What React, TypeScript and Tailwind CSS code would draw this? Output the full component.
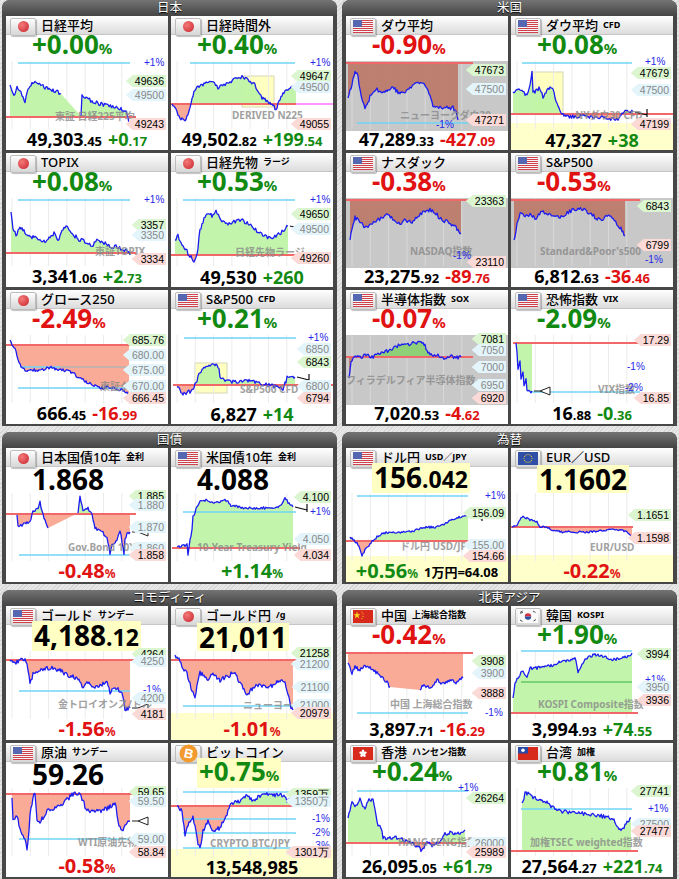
import React from "react";

type P = [number, number] | null;
type TagK = "h" | "m" | "l";
interface Cfg {
  t: string;
  s?: string;
  f: string;
  ox: number;
  oy: number;
  head: React.ReactNode;
  foot: React.ReactNode;
  ref: [number, number, number];
  cy?: [number, number, number][];
  extra?: [number, number, number, string][];
  pts: P[];
  gray?: boolean;
  inv?: boolean;
  hl?: [number, number, number, number];
  yb?: number;
  tags: [number, string, TagK][];
  pc?: [number, number, string][];
  wm?: [string, number, number];
  mk?: "t" | "r";
  nz?: number;
  seed: number;
}

function rng(seed: number) {
  let a = seed >>> 0;
  return () => {
    a = (a + 0x6d2b79f5) | 0;
    let t = Math.imul(a ^ (a >>> 15), 1 | a);
    t = (t + Math.imul(t ^ (t >>> 7), 61 | t)) ^ t;
    return ((t ^ (t >>> 14)) >>> 0) / 4294967296;
  };
}

// jagged line through key points
function jag(pts: number[][], noise: number, seed: number) {
  const r = rng(seed);
  const out: number[][] = [];
  for (let i = 0; i < pts.length - 1; i++) {
    const [x1, y1] = pts[i];
    const [x2, y2] = pts[i + 1];
    const n = Math.max(1, Math.round((x2 - x1) / 1.1));
    for (let s = 0; s < n; s++) {
      const t = s / n;
      let y = y1 + (y2 - y1) * t;
      if (s > 0 || i > 0) y += (r() - 0.5) * 2 * noise;
      out.push([x1 + (x2 - x1) * t, y]);
    }
  }
  out.push(pts[pts.length - 1]);
  return out;
}

const GR = "text-[#128a12]";
const RD = "text-[#e01212]";

const Pc = ({ v, up, yb }: { v: string; up: boolean; yb?: boolean }) => (
  <span className={`font-bold text-[26px] leading-[26px] ${up ? GR : RD} ${yb ? "bg-[#ffffc4] px-[2px]" : ""}`}>
    {v}
    <span className="text-[15px]">%</span>
  </span>
);

const Vl = ({ m, d, yb }: { m: string; d?: string; yb?: boolean }) => (
  <span className={`font-bold text-[28px] leading-[28px] text-black ${yb ? "bg-[#ffffc4] px-[2px]" : ""}`}>
    {m}
    {d && <span className="text-[23px]">{d}</span>}
  </span>
);

const Nm = ({ m, d, c }: { m: string; d?: string; c?: "g" | "r" }) => (
  <span className={`font-bold text-[18px] leading-[20px] ${c === "g" ? GR : c === "r" ? RD : "text-black"}`}>
    {m}
    {d && <span className="text-[13px]">{d}</span>}
  </span>
);

const Fp = ({ v, up }: { v: string; up: boolean }) => (
  <span className={`font-bold text-[20px] leading-[21px] ${up ? GR : RD}`}>
    {v}
    <span className="text-[12px]">%</span>
  </span>
);

const tagCls: Record<TagK, string> = {
  h: "bg-[#daf5cf] text-black",
  m: "bg-[#e3f5fb] text-[#888]",
  l: "bg-[#fbd9d6] text-black",
};

function Flag({ f }: { f: string }) {
  if (f === "jp")
    return <span className="w-[11px] h-[11px] rounded-full bg-[radial-gradient(circle_at_35%_35%,#f47a78,#c8232d)]" />;
  if (f === "us")
    return (
      <svg width="20" height="13" viewBox="0 0 20 13">
        <rect width="20" height="13" fill="#f4f4f4" />
        {[0, 2, 4, 6, 8, 10, 12].map((y) => (
          <rect key={y} y={y} width="20" height="1" fill="#d0414c" />
        ))}
        <rect width="9" height="7" fill="#5567b0" />
      </svg>
    );
  if (f === "eu")
    return (
      <svg width="20" height="13" viewBox="0 0 20 13">
        <rect width="20" height="13" fill="#3050a8" />
        {Array.from({ length: 12 }).map((_, i) => (
          <circle key={i} cx={10 + 4 * Math.cos((i * Math.PI) / 6)} cy={6.5 + 4 * Math.sin((i * Math.PI) / 6)} r="0.6" fill="#f5d020" />
        ))}
      </svg>
    );
  if (f === "cn")
    return (
      <svg width="20" height="13" viewBox="0 0 20 13">
        <rect width="20" height="13" fill="#d8291d" />
        <polygon points="4,1.5 4.9,4.2 7.6,4.2 5.4,5.8 6.2,8.4 4,6.8 1.8,8.4 2.6,5.8 0.4,4.2 3.1,4.2" fill="#f8d81e" />
        <circle cx="9" cy="2" r="0.6" fill="#f8d81e" />
        <circle cx="10" cy="4" r="0.6" fill="#f8d81e" />
        <circle cx="10" cy="6.5" r="0.6" fill="#f8d81e" />
        <circle cx="9" cy="8.5" r="0.6" fill="#f8d81e" />
      </svg>
    );
  if (f === "kr")
    return (
      <svg width="20" height="13" viewBox="0 0 20 13">
        <rect width="20" height="13" fill="#fafafa" />
        <path d="M6.8 6.5 A3.2 3.2 0 0 1 13.2 6.5 Z" fill="#d43040" />
        <path d="M6.8 6.5 A3.2 3.2 0 0 0 13.2 6.5 Z" fill="#2850a0" />
        <path d="M2 2.5 L4.5 1 M2.5 3.5 L5 2 M15 1 L17.5 2.5 M15.5 11 L18 9.5 M2 10 L4.5 11.5" stroke="#222" strokeWidth="0.8" />
      </svg>
    );
  if (f === "hk")
    return (
      <svg width="20" height="13" viewBox="0 0 20 13">
        <rect width="20" height="13" fill="#d8291d" />
        {[0, 1, 2, 3, 4].map((i) => {
          const cx = 10 + 2 * Math.cos((i * 2 * Math.PI) / 5 - Math.PI / 2);
          const cy = 6.5 + 2 * Math.sin((i * 2 * Math.PI) / 5 - Math.PI / 2);
          return <ellipse key={i} cx={cx} cy={cy} rx="1.3" ry="1.9" fill="#fff" transform={`rotate(${i * 72} ${cx} ${cy})`} />;
        })}
      </svg>
    );
  if (f === "tw")
    return (
      <svg width="20" height="13" viewBox="0 0 20 13">
        <rect width="20" height="13" fill="#d8291d" />
        <rect width="10" height="6.5" fill="#2848a8" />
        <circle cx="5" cy="3.25" r="1.8" fill="#fff" />
      </svg>
    );
  return (
    <svg width="19" height="19" viewBox="0 0 19 19">
      <circle cx="9.5" cy="9.5" r="9" fill="#f29a2e" />
      <text x="9.8" y="14" textAnchor="middle" fontSize="13" fontWeight="bold" fill="#fff" fontFamily="Liberation Sans, sans-serif" transform="rotate(12 9.5 9.5)">
        B
      </text>
    </svg>
  );
}

function Chart({ c, id }: { c: Cfg; id: string }) {
  const segs: number[][][] = [];
  let cur: number[][] = [];
  c.pts.forEach((p) => {
    if (p === null) {
      segs.push(cur);
      cur = [];
    } else cur.push([p[0] - c.ox, p[1] - c.oy]);
  });
  if (cur.length) segs.push(cur);
  const js = segs.map((s, i) => jag(s, c.nz ?? 1.6, c.seed + i * 17));
  const all = js.flat();
  const ry = c.ref[0] - c.oy;
  const first = all[0];
  const last = all[all.length - 1];
  const poly = [...all, [last[0], ry], [first[0], ry]].map((p) => p[0].toFixed(1) + "," + p[1].toFixed(1)).join(" ");
  const up = c.gray ? "#88d070" : "#bdf4a4";
  const dn = c.gray ? "#bc7a68" : "#f8a48e";
  const aC = c.inv ? dn : up;
  const bC = c.inv ? up : dn;
  const [lx, ly] = last;
  return (
    <>
      <svg className="absolute left-0 top-0 overflow-visible" width={162} height={68}>
        <defs>
          <clipPath id={id + "a"}>
            <rect x={0} y={-20} width={162} height={ry + 20} />
          </clipPath>
          <clipPath id={id + "b"}>
            <rect x={0} y={ry} width={162} height={120} />
          </clipPath>
        </defs>
        {c.gray && <rect x={0} y={0} width={162} height={70} fill="#c8c8c8" />}
        {c.hl && (
          <rect x={c.hl[0] - c.ox} y={c.hl[1] - c.oy} width={c.hl[2] - c.hl[0]} height={c.hl[3] - c.hl[1]} fill="#ffffc0" stroke="#d6d6b8" />
        )}
        {[0, 1, 2, 3, 4, 5, 6].map((i) => (
          <line key={i} x1={6 + i * 18.3} x2={6 + i * 18.3} y1={0} y2={68} stroke={c.gray ? "#d8d8d8" : "#ececec"} />
        ))}
        <polygon points={poly} fill={aC} clipPath={`url(#${id}a)`} opacity={0.92} />
        <polygon points={poly} fill={bC} clipPath={`url(#${id}b)`} opacity={0.92} />
        {(c.cy ?? []).map(([y, x1, x2], i) => (
          <line key={i} x1={x1 - c.ox} x2={x2 - c.ox} y1={y - c.oy} y2={y - c.oy} stroke="#6fd4f6" strokeWidth={1.6} />
        ))}
        {(c.extra ?? []).map(([y, x1, x2, col], i) => (
          <line key={i} x1={x1 - c.ox} x2={x2 - c.ox} y1={y - c.oy} y2={y - c.oy} stroke={col} strokeWidth={1.6} />
        ))}
        <line x1={c.ref[1] - c.ox} x2={c.ref[2] - c.ox} y1={ry} y2={ry} stroke="#f26868" strokeWidth={2} />
        {js.map((s, i) => (
          <polyline key={i} points={s.map((p) => p[0].toFixed(1) + "," + p[1].toFixed(1)).join(" ")} fill="none" stroke="#1c1cf2" strokeWidth={1.3} strokeLinejoin="round" />
        ))}
        {c.mk === "t" && (
          <path d={`M${lx + 2} ${ly} L${lx + 14} ${ly + 3} M${lx + 14} ${ly - 3} L${lx + 14} ${ly + 5}`} stroke="#111" strokeWidth={1.2} fill="none" />
        )}
        {c.mk === "r" && (
          <>
            <line x1={lx + 2} y1={ly} x2={lx + 8} y2={ly} stroke="#222" />
            <polygon points={`${lx + 8},${ly} ${lx + 18},${ly - 4} ${lx + 18},${ly + 4}`} fill="#fff" stroke="#222" strokeWidth={1} />
          </>
        )}
      </svg>
      {c.wm && (
        <span
          className="absolute whitespace-nowrap text-[10px] font-bold leading-none text-[#8a8a8a] opacity-80"
          style={{ left: c.wm[1] - c.ox, top: c.wm[2] - c.oy - 6 }}
        >
          {c.wm[0]}
        </span>
      )}
      {(c.pc ?? []).map(([x, y, t], i) => (
        <span
          key={i}
          className="absolute text-[10px] leading-none text-[#2626ea] font-['Liberation_Sans',sans-serif]"
          style={{ left: x - c.ox, top: y - c.oy - 5 }}
        >
          {t}
        </span>
      ))}
      {c.tags.map(([y, t, k], i) => (
        <div
          key={i}
          className={`absolute right-[2px] h-[12px] pl-[9px] pr-[2px] text-[10.5px] leading-[12px] font-['Liberation_Sans',sans-serif] [clip-path:polygon(7px_0,100%_0,100%_100%,7px_100%,0_50%)] ${tagCls[k]}`}
          style={{ top: y - c.oy - 6 }}
        >
          {t}
        </div>
      ))}
    </>
  );
}

function Tile({ c, id }: { c: Cfg; id: string }) {
  return (
    <div className="relative h-[134px] bg-white overflow-hidden">
      {c.yb && <div className="absolute left-0 right-0 bottom-0 bg-[#ffffcc]" style={{ top: c.yb - c.oy + 45 }} />}
      <div className="relative flex flex-col h-full">
        <div className="h-[19px] flex items-center gap-[5px] pl-[4px] bg-gradient-to-b from-white to-[#dcdcdc] border-b border-[#c6c6c6]">
          <div className="w-[26px] h-[18px] mt-[3px] shrink-0 rounded-[2px] border border-[#bcbcbc] bg-gradient-to-b from-[#fdfdfd] to-[#d6d6d6] shadow-[1px_1px_1px_rgba(0,0,0,0.25)] flex items-center justify-center">
            <Flag f={c.f} />
          </div>
          <span className="text-[13px] font-medium leading-[16px] text-black whitespace-nowrap">{c.t}</span>
          {c.s && <span className="text-[9px] font-bold leading-[12px] text-black whitespace-nowrap">{c.s}</span>}
        </div>
        <div className="h-[26px] pl-[26px] flex items-end">{c.head}</div>
        <div className="relative h-[68px]">
          <Chart c={c} id={id} />
        </div>
        <div className="h-[21px] flex items-center justify-center gap-[6px]">{c.foot}</div>
      </div>
    </div>
  );
}

const jp: Cfg[] = [
  {
    t: "日経平均", f: "jp", ox: 6, oy: 61, seed: 11, nz: 2,
    head: <Pc v="+0.00" up />,
    foot: <><Nm m="49,303" d=".45" /><Nm m="+0" d=".17" c="g" /></>,
    ref: [117, 6, 136], cy: [[63, 18, 130]],
    pts: [[10, 85], [12, 91], [14, 95], [17, 88], [21, 92], [25, 102], [28, 90], [32, 84], [36, 81], [42, 86], [47, 88], [52, 90], [57, 92], [61, 94], null,
      [81, 116], [82, 95], [86, 98], [92, 101], [100, 104], [108, 105], [114, 107], [120, 109], [125, 110], [128, 117], [129, 123]],
    tags: [[81, "49636", "h"], [95, "49500", "m"], [124, "49243", "l"]],
    pc: [[144, 63, "+1%"]], wm: ["東証 日経225平均", 55, 117],
  },
  {
    t: "日経時間外", f: "jp", ox: 171, oy: 61, seed: 22, nz: 1.8, mk: "t",
    head: <Pc v="+0.40" up />,
    foot: <><Nm m="49,502" d=".82" /><Nm m="+199" d=".54" c="g" /></>,
    ref: [104, 171, 296], cy: [[63, 190, 295]], extra: [[104, 296, 333, "#ff73ff"]], hl: [242, 76, 274, 107],
    pts: [[172, 104], [176, 110], [180, 118], [185, 122], [189, 112], [192, 98], [195, 90], [200, 86], [205, 84], [212, 82], [218, 88], [224, 85], [230, 82], [236, 78], [242, 77], [248, 80], [254, 84], [258, 92], [262, 98], [266, 100], [270, 103], [274, 106], [276, 110], [278, 103], [282, 96], [286, 90], [291, 88], [296, 88]],
    tags: [[76, "49647", "h"], [87, "49500", "m"], [124, "49055", "l"]],
    pc: [[310, 63, "+1%"]], wm: ["DERIVED N225", 232, 116],
  },
  {
    t: "TOPIX", f: "jp", ox: 6, oy: 198, seed: 33, nz: 2,
    head: <Pc v="+0.08" up />,
    foot: <><Nm m="3,341" d=".06" /><Nm m="+2" d=".73" c="g" /></>,
    ref: [253, 6, 136], cy: [[200, 18, 130]],
    pts: [[11, 212], [13, 228], [16, 236], [20, 226], [25, 232], [30, 238], [35, 236], [40, 240], [45, 241], [50, 238], [55, 232], [58, 240], [62, 232], [66, 226], [70, 230], [75, 236], [80, 240], [86, 242], [92, 245], [98, 240], [104, 243], [110, 247], [116, 246], [122, 249], [128, 252], [130, 255]],
    tags: [[225, "3357", "h"], [235, "3350", "m"], [259, "3334", "l"]],
    pc: [[144, 200, "+1%"]], wm: ["東証TOPIX", 95, 252],
  },
  {
    t: "日経先物", s: "ラージ", f: "jp", ox: 171, oy: 198, seed: 44, nz: 2, mk: "t",
    head: <Pc v="+0.53" up />,
    foot: <><Nm m="49,530" /><Nm m="+260" c="g" /></>,
    ref: [255, 171, 300], cy: [[200, 183, 295]],
    pts: [[175, 240], [178, 236], [182, 245], [186, 250], [190, 256], [194, 262], [197, 255], [200, 230], [204, 218], [208, 214], [212, 216], [216, 212], [222, 220], [228, 224], [234, 222], [240, 220], [246, 222], [252, 226], [258, 232], [264, 236], [270, 238], [276, 236], [282, 232], [288, 226]],
    tags: [[214, "49650", "h"], [229, "49500", "m"], [258, "49260", "l"]],
    pc: [[310, 200, "+1%"]], wm: ["日経先物ラージ", 235, 253],
  },
  {
    t: "グロース250", f: "jp", ox: 6, oy: 335, seed: 55, nz: 1.6,
    head: <Pc v="-2.49" up={false} />,
    foot: <><Nm m="666" d=".45" /><Nm m="-16" d=".99" c="r" /></>,
    ref: [345, 6, 136], cy: [[367, 20, 60], [388, 18, 130]], extra: [[367, 60, 130, "#b4b4b4"]],
    pts: [[10, 340], [12, 344], [14, 347], [16, 352], [18, 360], [20, 365], [22, 368], [27, 372], [33, 370], [40, 371], [46, 369], [50, 367], [54, 368], [57, 369], [63, 370], [70, 371], [74, 374], [77, 377], [83, 380], [88, 383], [93, 385], [98, 387], [103, 388], [108, 387], [113, 388], [117, 389], [120, 390], [124, 391], [127, 392], [129, 398]],
    tags: [[340, "685.76", "h"], [355, "680.00", "m"], [370, "675.00", "m"], [386, "670.00", "m"], [398, "666.45", "l"]],
    wm: ["東証グロース", 100, 387],
  },
  {
    t: "S&P500", s: "CFD", f: "us", ox: 171, oy: 335, seed: 66, nz: 2, mk: "t",
    head: <Pc v="+0.21" up />,
    foot: <><Nm m="6,827" /><Nm m="+14" c="g" /></>,
    ref: [385, 173, 333], cy: [[338, 184, 296]], hl: [195, 363, 227, 393],
    pts: [[177, 387], [181, 392], [185, 395], [189, 392], [192, 390], [195, 384], [197, 380], [200, 372], [203, 370], [205, 368], [208, 366], [210, 367], [214, 364], [217, 363], [219, 370], [220, 377], [225, 380], [233, 382], [240, 381], [247, 380], [252, 382], [257, 383], [262, 384], [267, 385], [272, 386], [277, 387], [283, 390], [285, 384], [287, 378], [291, 377], [295, 377]],
    tags: [[349, "6850", "m"], [362, "6843", "h"], [386, "6800", "m"], [398, "6794", "l"]],
    pc: [[308, 338, "+1%"]], wm: ["S&P500 CFD", 240, 390],
  },
];

const us: Cfg[] = [
  {
    t: "ダウ平均", f: "us", ox: 346, oy: 61, seed: 77, nz: 2, gray: true,
    head: <Pc v="-0.90" up={false} />,
    foot: <><Nm m="47,289" d=".33" /><Nm m="-427" d=".09" c="r" /></>,
    ref: [63, 346, 473], cy: [[123, 357, 468]],
    pts: [[348, 98], [352, 85], [355, 70], [358, 77], [361, 95], [365, 110], [370, 97], [377, 90], [383, 93], [388, 90], [393, 88], [398, 92], [403, 93], [410, 88], [417, 82], [423, 83], [427, 88], [430, 97], [433, 107], [440, 108], [447, 107], [453, 108], [456, 113], [458, 120]],
    tags: [[70, "47673", "h"], [89, "47500", "m"], [120, "47271", "l"]],
    pc: [[436, 125, "-1%"]], wm: ["ニューヨークダウ30", 400, 116],
  },
  {
    t: "ダウ平均", s: "CFD", f: "us", ox: 511, oy: 61, seed: 88, nz: 1.8, mk: "t", yb: 123,
    head: <Pc v="+0.08" up />,
    foot: <><Nm m="47,327" /><Nm m="+38" c="g" /></>,
    ref: [114, 511, 673], cy: [[63, 522, 632]], hl: [532, 72, 563, 114],
    pts: [[513, 92], [517, 90], [520, 90], [524, 93], [527, 95], [530, 85], [532, 73], [533, 93], [537, 90], [540, 88], [543, 97], [547, 90], [550, 87], [553, 90], [556, 100], [558, 107], [562, 113], [566, 116], [575, 117], [585, 116], [595, 118], [605, 117], [612, 119], [618, 120], [622, 114], [627, 110], [633, 112]],
    tags: [[73, "47679", "h"], [90, "47500", "m"], [124, "47199", "l"]],
    pc: [[645, 62, "+1%"]], wm: ["NYダウ30 CFD", 575, 116],
  },
  {
    t: "ナスダック", f: "us", ox: 346, oy: 198, seed: 99, nz: 2, gray: true,
    head: <Pc v="-0.38" up={false} />,
    foot: <><Nm m="23,275" d=".92" /><Nm m="-89" d=".76" c="r" /></>,
    ref: [200, 346, 473],
    pts: [[350, 240], [352, 228], [355, 218], [360, 222], [365, 228], [370, 225], [376, 220], [382, 218], [388, 214], [394, 220], [400, 224], [406, 220], [412, 222], [418, 216], [424, 212], [430, 210], [436, 214], [442, 220], [448, 222], [454, 226], [458, 230], [461, 233]],
    tags: [[201, "23363", "h"], [262, "23110", "l"]],
    pc: [[453, 256, "-1%"]], wm: ["NASDAQ指数", 410, 252],
  },
  {
    t: "S&P500", f: "us", ox: 511, oy: 198, seed: 111, nz: 2, gray: true,
    head: <Pc v="-0.53" up={false} />,
    foot: <><Nm m="6,812" d=".63" /><Nm m="-36" d=".46" c="r" /></>,
    ref: [200, 511, 640],
    pts: [[514, 240], [517, 225], [520, 212], [524, 216], [530, 215], [536, 218], [542, 212], [548, 214], [554, 216], [560, 218], [566, 214], [572, 210], [578, 208], [584, 210], [590, 213], [596, 218], [602, 222], [606, 216], [612, 218], [618, 226], [622, 230], [625, 236]],
    tags: [[206, "6843", "h"], [245, "6799", "l"]],
    pc: [[645, 260, "-1%"]], wm: ["Standard&Poor's500", 540, 252],
  },
  {
    t: "半導体指数", s: "SOX", f: "us", ox: 346, oy: 335, seed: 122, nz: 2, gray: true,
    head: <Pc v="-0.07" up={false} />,
    foot: <><Nm m="7,020" d=".53" /><Nm m="-4" d=".62" c="r" /></>,
    ref: [357, 346, 473],
    pts: [[349, 378], [351, 362], [354, 356], [360, 358], [366, 355], [372, 357], [378, 355], [384, 353], [390, 349], [396, 346], [402, 345], [408, 344], [414, 343], [420, 341], [424, 344], [428, 351], [432, 356], [438, 355], [444, 358], [450, 356], [456, 358], [461, 357]],
    tags: [[339, "7081", "h"], [350, "7050", "m"], [367, "7000", "m"], [385, "6950", "m"], [398, "6920", "l"]],
    wm: ["フィラデルフィア半導体指数", 346, 381],
  },
  {
    t: "恐怖指数", s: "VIX", f: "us", ox: 511, oy: 335, seed: 133, nz: 1.5, inv: true, mk: "r",
    head: <Pc v="-2.09" up />,
    foot: <><Nm m="16" d=".88" /><Nm m="-0" d=".36" c="g" /></>,
    ref: [343, 513, 640], cy: [[392, 530, 640]],
    pts: [[516, 343], [517, 352], [518, 368], [520, 360], [521, 378], [523, 372], [524, 386], [526, 380], [527, 390], [530, 392], [532, 391]],
    tags: [[340, "17.29", "l"], [398, "16.85", "l"]],
    pc: [[627, 367, "-1%"], [625, 388, "-2%"]], wm: ["VIX指数", 598, 390],
  },
];

const bond: Cfg[] = [
  {
    t: "日本国債10年", s: "金利", f: "jp", ox: 6, oy: 493, seed: 144, nz: 1.5, mk: "r",
    head: <Vl m="1.868" />,
    foot: <Fp v="-0.48" up={false} />,
    ref: [514, 6, 136], cy: [[555, 19, 130]],
    pts: [[17, 515], [18, 527], [22, 525], [26, 523], [30, 522], [32, 515], [33, 512], [36, 510], [38, 508], [40, 502], [42, 512], [45, 520], [48, 528], null,
      [78, 513], [80, 497], [82, 505], [83, 510], [86, 508], [88, 508], [90, 512], [92, 515], [94, 522], [95, 528], [98, 530], [100, 530], [104, 534], [107, 537], [109, 548], [110, 555], [112, 545], [113, 543], [116, 541], [117, 540], [119, 534], [120, 530], [122, 542], [124, 553], [125, 540], [127, 533], [130, 532]],
    tags: [[496, "1.885", "h"], [505, "1.880", "m"], [527, "1.870", "m"], [548, "1.860", "m"], [555, "1.858", "l"]],
    wm: ["Gov.Bond 10Y", 68, 548],
  },
  {
    t: "米国債10年", s: "金利", f: "us", ox: 171, oy: 493, seed: 155, nz: 1.3, mk: "t",
    head: <Vl m="4.088" />,
    foot: <Fp v="+1.14" up />,
    ref: [548, 172, 300], cy: [[512, 183, 296]],
    pts: [[177, 547], [182, 546], [187, 545], [188, 555], [190, 540], [192, 530], [193, 517], [195, 512], [197, 507], [200, 502], [204, 501], [207, 500], [212, 502], [217, 502], [222, 501], [227, 500], [230, 505], [235, 506], [240, 507], [247, 508], [253, 509], [260, 508], [267, 508], [272, 509], [277, 508], [281, 505], [285, 497], [288, 502], [293, 507]],
    tags: [[497, "4.100", "h"], [539, "4.050", "m"], [555, "4.034", "l"]],
    pc: [[310, 512, "+1%"]], wm: ["10-Year Treasury Yield", 197, 548],
  },
];

const fx: Cfg[] = [
  {
    t: "ドル円", s: "USD／JPY", f: "us", ox: 346, oy: 493, seed: 166, nz: 1.2, mk: "t", yb: 556,
    head: <Vl m="156" d=".042" yb />,
    foot: <><Fp v="+0.56" up /><span className="font-bold text-[13px] leading-[16px] text-black">1万円=64.08</span></>,
    ref: [541, 346, 473], cy: [[496, 357, 468]],
    pts: [[350, 537], [353, 540], [356, 542], [358, 545], [360, 550], [362, 555], [365, 550], [367, 547], [370, 544], [373, 540], [377, 537], [380, 535], [385, 533], [390, 532], [398, 532], [407, 532], [412, 531], [417, 530], [422, 528], [427, 527], [432, 527], [437, 527], [442, 525], [447, 523], [450, 521], [453, 520], [457, 518], [460, 517], [464, 516], [468, 516]],
    tags: [[513, "156.09", "h"], [545, "155.00", "m"], [556, "154.66", "l"]],
    pc: [[485, 496, "+1%"]], wm: ["ドル円 USD/JPY", 400, 547],
  },
  {
    t: "EUR／USD", f: "eu", ox: 511, oy: 493, seed: 177, nz: 1, mk: "t", yb: 555,
    head: <Vl m="1.1602" yb />,
    foot: <Fp v="-0.22" up={false} />,
    ref: [527, 511, 633],
    pts: [[512, 527], [515, 526], [517, 525], [520, 520], [523, 516], [526, 518], [530, 520], [534, 521], [537, 522], [540, 527], [544, 527], [547, 527], [550, 529], [553, 530], [557, 531], [560, 532], [567, 532], [573, 532], [580, 532], [590, 532], [598, 531], [607, 530], [614, 530], [620, 530], [624, 531], [627, 532], [630, 535], [632, 537]],
    tags: [[515, "1.1651", "h"], [538, "1.1598", "l"]],
    wm: ["EUR/USD", 590, 548],
  },
];

const cmd: Cfg[] = [
  {
    t: "ゴールド", s: "サンデー", f: "us", ox: 6, oy: 651, seed: 188, nz: 2.2, mk: "r",
    head: <Vl m="4,188" d=".12" yb />,
    foot: <Fp v="-1.56" up={false} />,
    ref: [660, 6, 136], cy: [[691, 19, 130]],
    pts: [[10, 660], [14, 662], [17, 662], [20, 660], [23, 658], [25, 660], [27, 665], [29, 675], [30, 683], [32, 678], [33, 673], [36, 672], [40, 670], [45, 669], [50, 668], [55, 669], [60, 670], [64, 673], [67, 675], [70, 676], [73, 677], [77, 679], [80, 680], [82, 686], [83, 690], [85, 686], [87, 683], [92, 685], [97, 687], [102, 684], [107, 682], [109, 688], [110, 693], [113, 690], [117, 688], [120, 691], [122, 693], [124, 702], [125, 710], [128, 709], [130, 708]],
    tags: [[654, "4264", "h"], [661, "4250", "m"], [698, "4200", "m"], [714, "4181", "l"]],
    pc: [[143, 690, "-1%"]], wm: ["金トロイオンス/ドル", 58, 705],
  },
  {
    t: "ゴールド円", s: "/g", f: "jp", ox: 171, oy: 651, seed: 199, nz: 2.2, mk: "t", yb: 713,
    head: <Vl m="21,011" yb />,
    foot: <Fp v="-1.01" up={false} />,
    ref: [660, 171, 300], cy: [[706, 183, 295]],
    pts: [[175, 655], [178, 658], [180, 660], [183, 668], [186, 672], [188, 677], [191, 688], [195, 698], [197, 685], [200, 673], [204, 676], [207, 680], [210, 677], [213, 675], [217, 678], [220, 680], [224, 678], [227, 677], [230, 675], [233, 672], [236, 676], [240, 682], [244, 690], [247, 697], [250, 692], [253, 687], [258, 686], [263, 685], [267, 686], [270, 687], [274, 684], [277, 682], [280, 681], [283, 680], [285, 684], [287, 690], [289, 698], [290, 705], [293, 710]],
    tags: [[653, "21258", "h"], [664, "21200", "m"], [687, "21100", "m"], [705, "21000", "m"], [713, "20979", "l"]],
    wm: ["ニューヨーク金", 243, 706],
  },
  {
    t: "原油", s: "サンデー", f: "us", ox: 6, oy: 787, seed: 211, nz: 2.5, mk: "r",
    head: <Vl m="59.26" />,
    foot: <Fp v="-0.58" up={false} />,
    ref: [793, 6, 136], cy: [[838, 19, 130]],
    pts: [[12, 797], [13, 820], [15, 818], [17, 815], [20, 827], [23, 835], [25, 840], [27, 847], [29, 830], [30, 813], [32, 803], [33, 797], [35, 793], [36, 805], [37, 817], [40, 823], [43, 816], [47, 810], [50, 808], [53, 807], [58, 805], [63, 802], [68, 798], [73, 793], [77, 792], [80, 795], [82, 798], [85, 805], [87, 810], [92, 810], [97, 810], [102, 809], [107, 808], [111, 805], [115, 802], [117, 812], [118, 820], [120, 826], [122, 830], [124, 826], [125, 823], [128, 821], [130, 820]],
    tags: [[791, "59.65", "h"], [800, "59.50", "m"], [838, "59.00", "m"], [851, "58.84", "l"]],
    wm: ["WTI原油先物", 78, 842],
  },
  {
    t: "ビットコイン", f: "btc", ox: 171, oy: 787, seed: 222, nz: 2, mk: "t", yb: 848,
    head: <Pc v="+0.75" up yb />,
    foot: <Nm m="13,548,985" />,
    ref: [805, 171, 300], cy: [[791, 183, 296], [818, 183, 296], [832, 183, 296], [847, 183, 296]],
    pts: [[177, 805], [180, 808], [182, 810], [184, 825], [185, 837], [187, 828], [190, 820], [193, 817], [196, 830], [198, 842], [200, 848], [202, 838], [203, 830], [206, 824], [208, 820], [211, 826], [213, 830], [217, 828], [220, 827], [222, 823], [223, 820], [225, 816], [227, 813], [229, 808], [230, 805], [233, 802], [237, 801], [240, 800], [244, 797], [247, 793], [250, 797], [253, 800], [257, 797], [260, 795], [264, 794], [267, 793], [270, 794], [273, 795], [277, 793], [280, 793], [284, 796], [287, 800], [290, 797], [293, 795]],
    tags: [[793, "1359万", "h"], [800, "1350万", "m"], [851, "1301万", "l"]],
    pc: [[312, 818, "-1%"], [312, 832, "-2%"], [312, 845, "-3%"]], wm: ["CRYPTO BTC/JPY", 210, 843],
  },
];

const asia: Cfg[] = [
  {
    t: "中国", s: "上海総合指数", f: "cn", ox: 346, oy: 651, seed: 233, nz: 1.8,
    head: <Pc v="-0.42" up={false} />,
    foot: <><Nm m="3,897" d=".71" /><Nm m="-16" d=".29" c="r" /></>,
    ref: [653, 346, 473], cy: [[713, 357, 468]],
    pts: [[348, 663], [350, 668], [352, 673], [355, 667], [358, 669], [360, 670], [364, 667], [367, 665], [370, 668], [373, 670], [376, 672], [380, 675], [383, 678], [385, 680], [388, 684], [390, 687], null,
      [420, 690], [423, 685], [427, 687], [430, 688], [434, 684], [437, 680], [440, 682], [443, 683], [447, 681], [450, 680], [454, 682], [457, 683], [460, 680], [463, 678]],
    tags: [[661, "3908", "h"], [673, "3900", "m"], [693, "3888", "l"]],
    pc: [[485, 713, "-1%"]], wm: ["中国 上海総合指数", 390, 705],
  },
  {
    t: "韓国", s: "KOSPI", f: "kr", ox: 511, oy: 651, seed: 244, nz: 1.5,
    head: <Pc v="+1.90" up />,
    foot: <><Nm m="3,994" d=".93" /><Nm m="+74" d=".55" c="g" /></>,
    ref: [713, 511, 638], cy: [[651, 521, 632]], extra: [[682, 521, 632, "#62c862"]],
    pts: [[513, 698], [515, 683], [518, 677], [520, 674], [523, 670], [525, 675], [527, 678], [530, 668], [534, 668], [537, 668], [540, 667], [543, 667], [548, 666], [553, 665], [557, 663], [560, 662], [565, 661], [570, 660], [575, 658], [577, 665], [578, 672], [580, 668], [582, 665], [585, 660], [587, 658], [590, 656], [593, 655], [598, 655], [603, 656], [608, 658], [613, 660], [617, 659], [620, 658], [624, 657], [627, 657], [630, 655], [632, 653]],
    tags: [[654, "3994", "h"], [687, "3950", "m"], [700, "3936", "l"]],
    pc: [[645, 680, "+1%"]], wm: ["KOSPI Composite指数", 538, 705],
  },
  {
    t: "香港", s: "ハンセン指数", f: "hk", ox: 346, oy: 787, seed: 255, nz: 2,
    head: <Pc v="+0.24" up />,
    foot: <><Nm m="26,095" d=".05" /><Nm m="+61" d=".79" c="g" /></>,
    ref: [842, 346, 473], cy: [[790, 357, 468]],
    pts: [[348, 817], [350, 808], [352, 802], [355, 804], [357, 805], [360, 798], [363, 804], [365, 810], [368, 800], [370, 799], [373, 798], [375, 810], [377, 822], [380, 825], [382, 832], [383, 837], [387, 838], [390, 837], [393, 836], [398, 838], [403, 839], [407, 840], [412, 842], [417, 845], [420, 848], [422, 850], [425, 844], [427, 840], [430, 843], [433, 845], [437, 842], [440, 840], [443, 836], [445, 833], [449, 832], [453, 832], [457, 831], [460, 832], [463, 830], [465, 829]],
    tags: [[797, "26264", "h"], [842, "26000", "m"], [851, "25989", "l"]],
    pc: [[458, 787, "+1%"]], wm: ["HANG SENG指数", 398, 842],
  },
  {
    t: "台湾", s: "加権", f: "tw", ox: 511, oy: 787, seed: 266, nz: 2,
    head: <Pc v="+0.81" up />,
    foot: <><Nm m="27,564" d=".27" /><Nm m="+221" d=".74" c="g" /></>,
    ref: [850, 511, 638], cy: [[808, 521, 632]],
    pts: [[522, 802], [524, 796], [525, 793], [528, 792], [530, 795], [533, 797], [537, 798], [540, 798], [544, 800], [547, 802], [550, 805], [553, 807], [557, 809], [560, 810], [567, 811], [573, 812], [580, 812], [587, 813], [593, 814], [600, 815], [607, 816], [613, 818], [616, 823], [618, 827], [621, 828], [623, 828], [625, 824], [627, 820], [631, 817]],
    tags: [[790, "27741", "h"], [823, "27500", "m"], [830, "27477", "l"]],
    pc: [[648, 808, "+1%"]], wm: ["加権TSEC weighted指数", 530, 842],
  },
];

function Section({ title, tiles, k }: { title: string; tiles: Cfg[]; k: string }) {
  return (
    <div className="flex flex-col rounded-t-[8px] bg-[#474747]">
      <div className="h-[15px] flex items-center justify-center rounded-t-[8px] bg-gradient-to-b from-[#747474] to-[#474747] text-white text-[12.5px] leading-[15px] [text-shadow:0_1px_1px_#000]">
        {title}
      </div>
      <div className="grid grid-cols-2 gap-[3px] px-[4px] pt-[1px] pb-[2px]">
        {tiles.map((c, i) => (
          <Tile key={i} c={c} id={k + i} />
        ))}
      </div>
    </div>
  );
}

export default function App() {
  return (
    <div className="w-[679px] h-[879px] overflow-hidden flex gap-[5px] px-[2px] bg-[repeating-linear-gradient(135deg,#d6d6d6_0px,#d6d6d6_1px,#e8e8e8_1px,#e8e8e8_3px)] font-['Noto_Sans','Noto_Sans_CJK_JP',sans-serif]">
      <div className="w-[335px] flex flex-col gap-[6px]">
        <Section title="日本" tiles={jp} k="jp" />
        <Section title="国債" tiles={bond} k="bd" />
        <Section title="コモディティ" tiles={cmd} k="cm" />
      </div>
      <div className="w-[335px] flex flex-col gap-[6px]">
        <Section title="米国" tiles={us} k="us" />
        <Section title="為替" tiles={fx} k="fx" />
        <Section title="北東アジア" tiles={asia} k="as" />
      </div>
    </div>
  );
}
